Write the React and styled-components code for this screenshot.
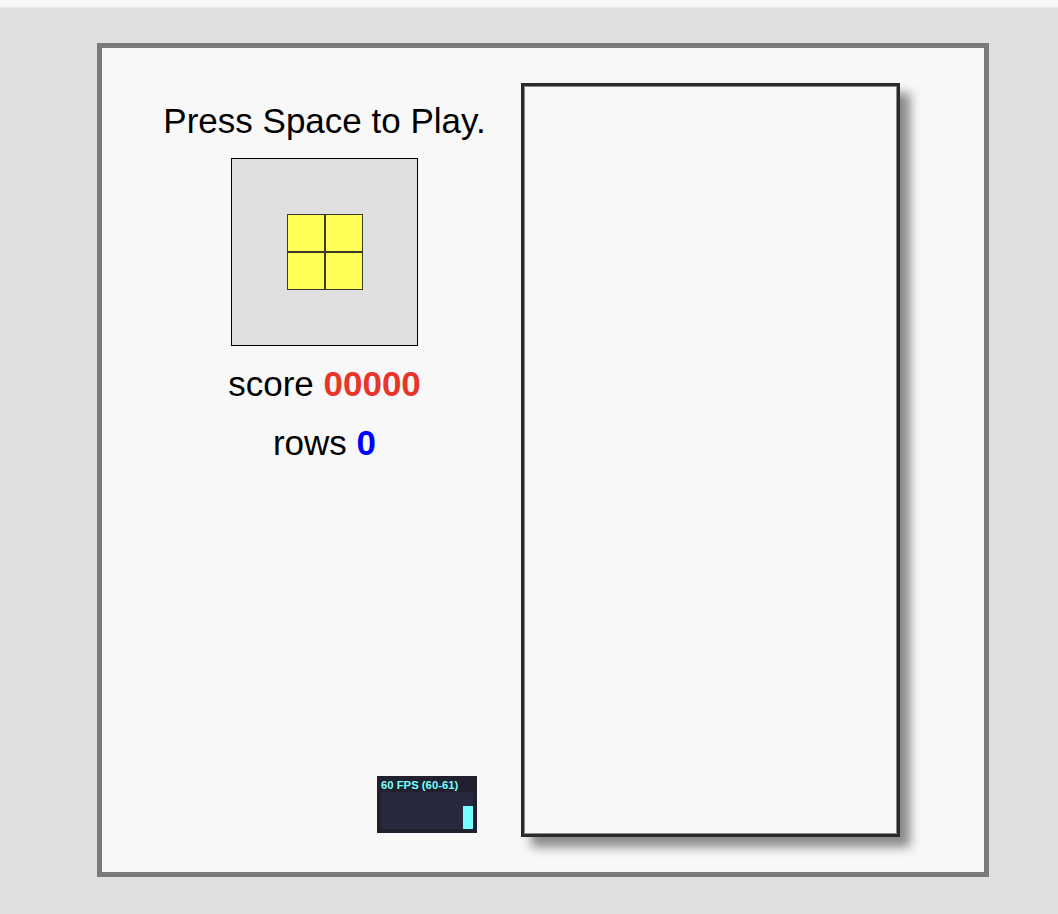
import React from "react";
import styled, { createGlobalStyle } from "styled-components";

const GlobalStyle = createGlobalStyle`
    html, body {
        margin: 0;
        padding: 0;
        background: #e0e0e0;
        font-family: "Liberation Sans", Arial, sans-serif;
    }
`;

const TopStrip = styled.div`
    height: 7px;
    background: #f8f8f8;
    border-bottom: 1px solid #eaeaea;
`;

const Frame = styled.div`
    box-sizing: border-box;
    width: 892px;
    height: 834px;
    margin: 35px 0 0 97px;
    border: 5px solid #7a7a7a;
    background: #f8f8f8;
    display: flex;
    gap: 22px;
    padding: 35px 84px 35px 48px;
`;

const SidePanel = styled.div`
    width: 349px;
    display: flex;
    flex-direction: column;
    align-items: center;
    padding-top: 18px;
`;

const Title = styled.div`
    font-size: 35px;
    line-height: 40px;
    color: #000;
    white-space: nowrap;
`;

const Preview = styled.div`
    box-sizing: border-box;
    width: 187px;
    height: 188px;
    margin-top: 17px;
    border: 1px solid #000;
    background: #e0e0e0;
    display: flex;
    align-items: center;
    justify-content: center;
`;

const Piece = styled.div`
    display: grid;
    grid-template-columns: repeat(2, 38px);
    grid-template-rows: repeat(2, 38px);
`;

const Cell = styled.div`
    box-sizing: border-box;
    background: #ffff55;
    border: 1px solid #3a3a2a;
`;

const Stat = styled.div`
    font-size: 35px;
    line-height: 40px;
    margin-top: ${(p) => p.$gap}px;
    color: #000;
    white-space: nowrap;
`;

const Value = styled.span`
    font-weight: bold;
    color: ${(p) => p.$color};
`;

const FpsMeter = styled.div`
    box-sizing: border-box;
    width: 100px;
    height: 57px;
    margin-top: auto;
    margin-bottom: 4px;
    margin-right: 22px;
    align-self: flex-end;
    background: #20202f;
    padding: 3px 4px 4px;
    display: flex;
    flex-direction: column;
`;

const FpsLabel = styled.div`
    font-family: "Liberation Sans", Arial, sans-serif;
    font-weight: bold;
    font-size: 11.3px;
    line-height: 13px;
    color: #77ffff;
    white-space: nowrap;
`;

const FpsGraph = styled.div`
    margin-top: auto;
    height: 37px;
    background: #28283f;
    display: flex;
    justify-content: flex-end;
    align-items: flex-end;
`;

const FpsBar = styled.div`
    width: 10px;
    background: #77ffff;
`;

const Board = styled.div`
    box-sizing: border-box;
    width: 379px;
    height: 754px;
    border: 3px solid #2a2a2a;
    background: #f8f8f8;
    box-shadow: inset 0 0 0 1px #8a8a8a, 10px 10px 10px rgba(0, 0, 0, 0.45);
`;

const App = () => {
    const fps = { value: 60, min: 60, max: 61, bar: 23 };

    return (
        <>
            <GlobalStyle />
            <TopStrip />
            <Frame>
                <SidePanel>
                    <Title>Press Space to Play.</Title>
                    <Preview>
                        <Piece>
                            <Cell />
                            <Cell />
                            <Cell />
                            <Cell />
                        </Piece>
                    </Preview>
                    <Stat $gap={18}>
                        score <Value $color="#e8352a">00000</Value>
                    </Stat>
                    <Stat $gap={19}>
                        rows <Value $color="#0000ff">0</Value>
                    </Stat>
                    <FpsMeter>
                        <FpsLabel>
                            {fps.value} FPS ({fps.min}-{fps.max})
                        </FpsLabel>
                        <FpsGraph>
                            <FpsBar style={{ height: fps.bar }} />
                        </FpsGraph>
                    </FpsMeter>
                </SidePanel>
                <Board />
            </Frame>
        </>
    );
};

export default App;
